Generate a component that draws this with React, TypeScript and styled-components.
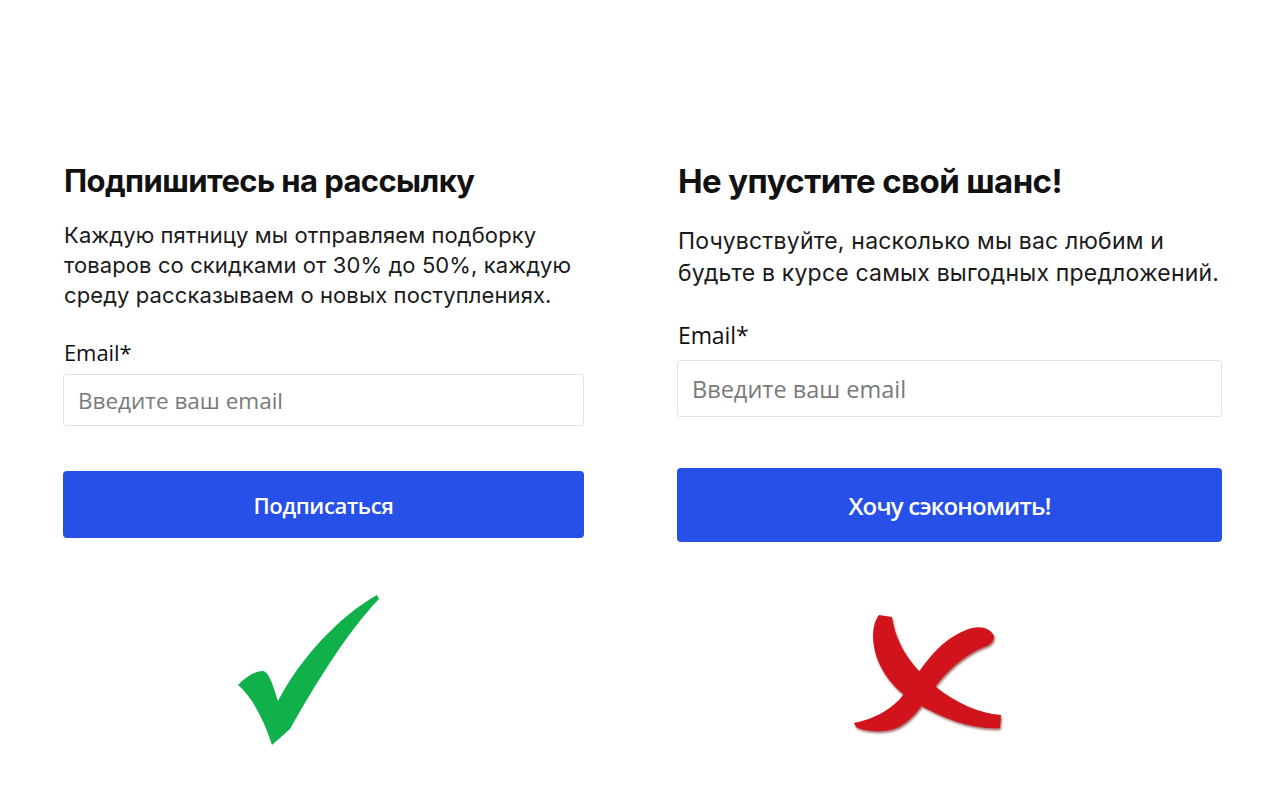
import React from "react";
import styled, { createGlobalStyle } from "styled-components";

const GlobalStyle = createGlobalStyle`
  html, body { margin: 0; padding: 0; background: #ffffff; }
  body { font-family: "Inter", "Roboto", sans-serif; -webkit-font-smoothing: antialiased; }
  * { box-sizing: border-box; }
`;

type Cfg = {
  width: number;
  titleSize: number;
  bodySize: number;
  bodyLine: number;
  bodyGap: number;
  bodySpacing: number;
  labelSize: number;
  labelLine: number;
  labelGap: number;
  inputGap: number;
  inputHeight: number;
  inputSize: number;
  buttonGap: number;
  buttonHeight: number;
  buttonSize: number;
  buttonSpacing: number;
  iconGap: number;
  iconShift: number;
};

const Page = styled.main`
  display: flex;
  align-items: flex-start;
  gap: 93px;
  padding: 162px 0 0 63px;
  min-height: 800px;
  background: #ffffff;
`;

const Column = styled.section<{ $w: number }>`
  display: flex;
  flex-direction: column;
  width: ${(p) => p.$w}px;
`;

const Title = styled.h2<{ $size: number }>`
  margin: 0;
  padding-left: 1px;
  font-family: "Inter", "Roboto", sans-serif;
  font-weight: 700;
  font-size: ${(p) => p.$size}px;
  line-height: 38px;
  letter-spacing: -0.6px;
  color: #111111;
  white-space: nowrap;
`;

const Body = styled.p<{ $size: number; $line: number; $gap: number; $ls: number }>`
  margin: ${(p) => p.$gap}px 0 0;
  padding-left: 1px;
  font-family: "Inter", "Roboto", sans-serif;
  font-weight: 400;
  font-size: ${(p) => p.$size}px;
  line-height: ${(p) => p.$line}px;
  letter-spacing: ${(p) => p.$ls}px;
  color: #1a1a1a;
  white-space: nowrap;
`;

const Label = styled.label<{ $size: number; $line: number; $gap: number }>`
  display: block;
  margin-top: ${(p) => p.$gap}px;
  padding-left: 1px;
  font-family: "Open Sans", sans-serif;
  font-size: ${(p) => p.$size}px;
  line-height: ${(p) => p.$line}px;
  letter-spacing: -0.1px;
  color: #111111;
`;

const Input = styled.input<{ $h: number; $size: number; $gap: number }>`
  display: block;
  width: 100%;
  height: ${(p) => p.$h}px;
  margin-top: ${(p) => p.$gap}px;
  padding: 0 14px;
  border: 1px solid #e3e3e3;
  border-radius: 3px;
  background: #ffffff;
  font-family: "Open Sans", sans-serif;
  font-size: ${(p) => p.$size}px;
  letter-spacing: 0;
  color: #333;
  outline: none;
  &::placeholder { color: #7a7a7a; }
`;

const Button = styled.button<{ $h: number; $size: number; $gap: number; $ls: number }>`
  display: flex;
  align-items: center;
  justify-content: center;
  width: 100%;
  height: ${(p) => p.$h}px;
  margin-top: ${(p) => p.$gap}px;
  border: none;
  border-radius: 4px;
  background: #2650e8;
  color: #ffffff;
  font-family: "Open Sans", sans-serif;
  font-weight: 600;
  font-size: ${(p) => p.$size}px;
  letter-spacing: ${(p) => p.$ls}px;
  cursor: pointer;
`;

const IconRow = styled.div<{ $gap: number; $shift: number }>`
  display: flex;
  justify-content: center;
  margin-top: ${(p) => p.$gap}px;
  padding-right: ${(p) => p.$shift}px;
`;

const CheckMark = () => (
  <svg width="142" height="150" viewBox="0 0 142 150">
    <path
      d="M0,90 C8,82 17,76 25,76 C31,77 35,90 40,106 C62,64 100,22 139,0 L141,4 C108,38 76,92 52,134 L34,150 C27,128 16,104 0,90 Z"
      fill="#10b14b"
    />
  </svg>
);

const CrossMark = () => (
  <svg width="152" height="134" viewBox="0 0 152 134" style={{ filter: "drop-shadow(1px 2px 1px rgba(90,0,0,0.55))" }}>
    <g fill="#d1141b">
      <path d="M25,0 L38,2 C42,30 58,52 82,72 C102,88 124,98 147,100 L146,113 C120,115 90,104 62,88 C38,74 20,50 19,22 C19,12 21,5 25,0 Z" />
      <path d="M112,15 C124,10 136,12 140,21 C140,27 136,30 130,32 C110,40 92,56 78,76 C66,94 56,108 40,114 C26,118 10,116 2,112 L0,108 C20,104 34,96 46,84 C62,64 78,28 112,15 Z" />
    </g>
  </svg>
);

const left: Cfg = {
  width: 521,
  titleSize: 31,
  bodySize: 22,
  bodyLine: 30,
  bodyGap: 20,
  bodySpacing: 0.1,
  labelSize: 22,
  labelLine: 30,
  labelGap: 27,
  inputGap: 7,
  inputHeight: 52,
  inputSize: 22.5,
  buttonGap: 45,
  buttonHeight: 67,
  buttonSize: 22,
  buttonSpacing: -0.35,
  iconGap: 57,
  iconShift: 30,
};

const right: Cfg = {
  width: 545,
  titleSize: 33,
  bodySize: 23,
  bodyLine: 32,
  bodyGap: 25,
  bodySpacing: 0.2,
  labelSize: 23,
  labelLine: 31,
  labelGap: 31,
  inputGap: 9,
  inputHeight: 57,
  inputSize: 23.5,
  buttonGap: 51,
  buttonHeight: 74,
  buttonSize: 24,
  buttonSpacing: -0.8,
  iconGap: 73,
  iconShift: 40,
};

type CardProps = {
  cfg: Cfg;
  title: string;
  text: React.ReactNode;
  action: string;
  icon: React.ReactNode;
};

const Card = ({ cfg, title, text, action, icon }: CardProps) => (
  <Column $w={cfg.width}>
    <Title $size={cfg.titleSize}>{title}</Title>
    <Body $size={cfg.bodySize} $line={cfg.bodyLine} $gap={cfg.bodyGap} $ls={cfg.bodySpacing}>
      {text}
    </Body>
    <Label $size={cfg.labelSize} $line={cfg.labelLine} $gap={cfg.labelGap}>
      Email*
    </Label>
    <Input $h={cfg.inputHeight} $size={cfg.inputSize} $gap={cfg.inputGap} placeholder="Введите ваш email" />
    <Button $h={cfg.buttonHeight} $size={cfg.buttonSize} $gap={cfg.buttonGap} $ls={cfg.buttonSpacing}>
      {action}
    </Button>
    <IconRow $gap={cfg.iconGap} $shift={cfg.iconShift}>
      {icon}
    </IconRow>
  </Column>
);

export default function App() {
  return (
    <>
      <GlobalStyle />
      <Page>
        <Card
          cfg={left}
          title="Подпишитесь на рассылку"
          text={
            <>
              Каждую пятницу мы отправляем подборку
              <br />
              товаров со скидками от 30% до 50%, каждую
              <br />
              среду рассказываем о новых поступлениях.
            </>
          }
          action="Подписаться"
          icon={<CheckMark />}
        />
        <Card
          cfg={right}
          title="Не упустите свой шанс!"
          text={
            <>
              Почувствуйте, насколько мы вас любим и
              <br />
              будьте в курсе самых выгодных предложений.
            </>
          }
          action="Хочу сэкономить!"
          icon={<CrossMark />}
        />
      </Page>
    </>
  );
}
